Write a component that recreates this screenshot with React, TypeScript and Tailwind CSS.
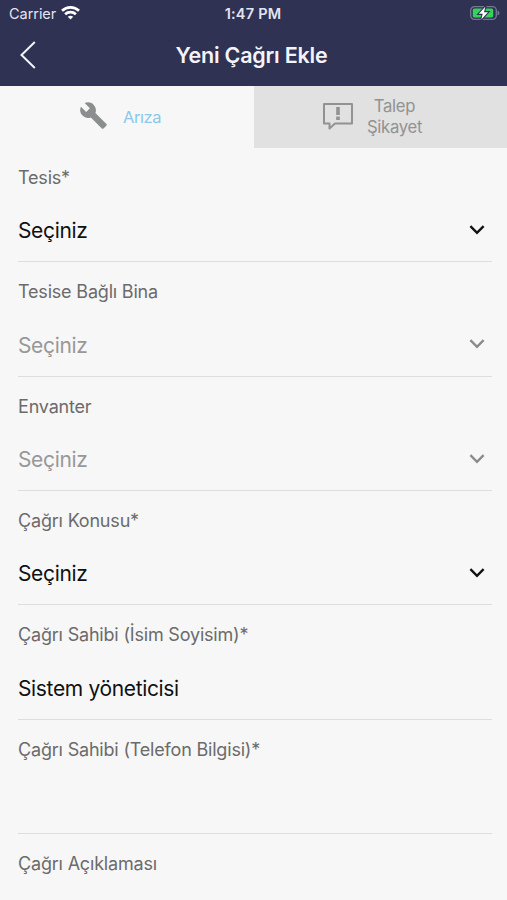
import React from "react";
import { MdBuild } from "react-icons/md";

type Field = {
  label: string;
  value: string;
  select?: boolean;
  disabled?: boolean;
};

const fields: Field[] = [
  { label: "Tesis*", value: "Seçiniz", select: true },
  { label: "Tesise Bağlı Bina", value: "Seçiniz", select: true, disabled: true },
  { label: "Envanter", value: "Seçiniz", select: true, disabled: true },
  { label: "Çağrı Konusu*", value: "Seçiniz", select: true },
  { label: "Çağrı Sahibi (İsim Soyisim)*", value: "Sistem yöneticisi" },
  { label: "Çağrı Sahibi (Telefon Bilgisi)*", value: "" },
  { label: "Çağrı Açıklaması", value: "" },
];

function StatusBar() {
  return (
    <div className="grid h-[27px] grid-cols-3 items-center pl-[9px] pr-[7px] text-[14.5px] leading-[27px] text-[#e4e4f0]">
      <div className="flex items-center gap-[5px]">
        <span className="tracking-[-0.05px]">Carrier</span>
        <svg className="-mt-[2px]" width="19" height="14" viewBox="0 0 19 14" fill="none" stroke="#fff" strokeWidth="2.7">
          <path d="M1 4.8C5.8 .2 13.2 .2 18 4.8" />
          <path d="M4.1 8.2c3-2.8 7.8-2.8 10.8 0" />
          <path d="M6.8 10.7c1.6-1.3 3.8-1.3 5.4 0L9.5 13.5z" fill="#fff" stroke="none" />
        </svg>
      </div>
      <span className="-ml-[3px] text-center font-semibold tracking-[0.2px]">1:47 PM</span>
      <svg className="-mt-[1px] justify-self-end" width="31" height="16" viewBox="0 0 31 16">
        <rect x="1.7" y="1.7" width="25.6" height="12.6" rx="3.8" fill="none" stroke="#747890" strokeWidth="1.3" />
        <rect x="3.8" y="3.6" width="20.4" height="8.8" rx="1.6" fill="#36d35c" />
        <path d="M28.5 5.5c2.7 1 2.7 4 0 5z" fill="#747890" />
        <path d="M16.3 1.7 9.8 8.8h3.9l-1.4 5.6L19 7.2h-4z" fill="#fff" stroke="#2f3252" strokeWidth="2.2" paintOrder="stroke" />
      </svg>
    </div>
  );
}

function Chevron({ disabled }: { disabled?: boolean }) {
  return (
    <svg className="-mt-[3px]" width="16" height="10" viewBox="0 0 16 10" fill="none" stroke={disabled ? "#8b8b8b" : "#111"} strokeWidth="2.4">
      <path d="M1.4 1.2 8 7.8l6.6-6.6" />
    </svg>
  );
}

function FieldRow({ field }: { field: Field }) {
  return (
    <div className="flex h-[114.4px] shrink-0 flex-col border-b-[1.5px] border-[#dedede]">
      <label className="mt-[17px] self-start whitespace-nowrap text-[18px] leading-[26px] tracking-[-0.19px] text-[#6b6b6b]">{field.label}</label>
      <div className={`mt-[25.5px] flex h-[30px] items-center justify-between pr-[7px] text-[21px] leading-[30px] tracking-[-0.35px] ${field.disabled ? "text-[#989898]" : "text-[#111]"}`}>
        <span>{field.value}</span>
        {field.select && <Chevron disabled={field.disabled} />}
      </div>
    </div>
  );
}

export default function App() {
  return (
    <div className="flex h-[900px] w-[507px] flex-col overflow-hidden bg-[#f7f7f7] font-['Inter','Liberation_Sans',sans-serif]">
      <header className="h-[86px] shrink-0 bg-[#2f3252]">
        <StatusBar />
        <div className="grid h-[57px] grid-cols-[60px_1fr_60px] items-center">
          <svg className="-mt-[2px] ml-[19px]" width="18" height="30" viewBox="0 0 18 30" fill="none" stroke="#f4f4fb" strokeWidth="2">
            <path d="M15.8 2 2.5 15l13.3 13" />
          </svg>
          <h1 className="-ml-[4px] -mt-[2px] text-center text-[21.5px] font-semibold leading-[30px] tracking-[-0.22px] text-[#f3f3fc]">Yeni Çağrı Ekle</h1>
        </div>
      </header>
      <nav className="grid h-[61.8px] shrink-0 grid-cols-2">
        <button className="flex items-center pl-[79px]">
          <MdBuild className="-mt-[3px]" size={29} color="#8b8e8e" />
          <span className="ml-[15px] mt-[1px] text-[16.5px] tracking-[-0.45px] text-[#8bc8ea]">Arıza</span>
        </button>
        <button className="flex items-center bg-[#e1e1e1] pl-[68px] text-[#929292]">
          <svg className="-mt-[2px]" width="32" height="30" viewBox="0 0 32 30" fill="none" stroke="#929292" strokeWidth="2">
            <path d="M2 3h28v19.5H13L7.5 27.5v-5H2z" strokeLinejoin="round" />
            <path d="M16 6v8M16 15.5v3.5" strokeWidth="3.6" />
          </svg>
          <span className="ml-[13px] mt-[1px] w-[56px] text-center text-[16.7px] leading-[21px] tracking-[-0.3px]">Talep Şikayet</span>
        </button>
      </nav>
      <main className="flex flex-col pl-[18px] pr-[15px]">
        {fields.map((field) => <FieldRow key={field.label} field={field} />)}
      </main>
    </div>
  );
}
